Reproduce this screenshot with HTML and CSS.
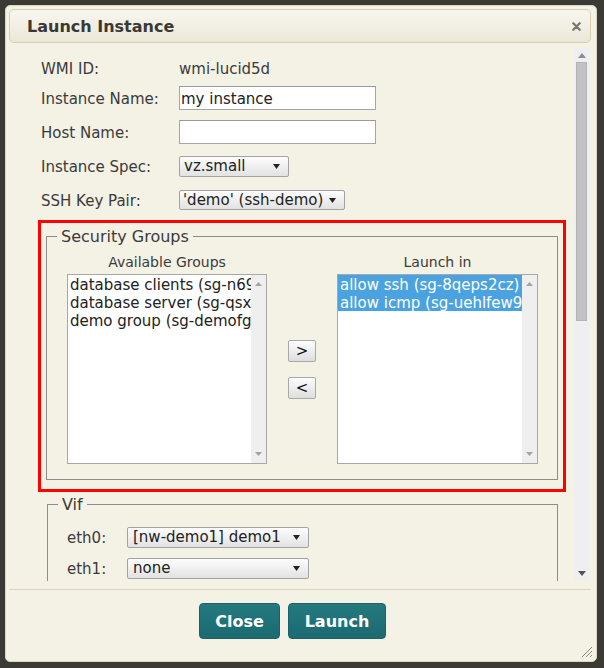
FILE: index.html
```html
<!DOCTYPE html>
<html>
<head>
<meta charset="utf-8">
<link rel="stylesheet" href="styles.css">
</head>
<body>
<div class="dialog">
  <div class="titlebar">
    <span class="title">Launch Instance</span>
    <svg class="close" width="9" height="9" viewBox="0 0 9 9"><path d="M1.3 1.3L7.7 7.7M7.7 1.3L1.3 7.7" stroke="#7b7770" stroke-width="2.3" stroke-linecap="round"/></svg>
  </div>
  <div class="body">
    <div class="scroll">
      <div class="form">
        <div class="row r1"><span class="lbl">WMI ID:</span><span class="val">wmi-lucid5d</span></div>
        <div class="row r2"><span class="lbl">Instance Name:</span><input class="input" type="text" value="my instance"></div>
        <div class="row"><span class="lbl">Host Name:</span><input class="input" type="text" value=""></div>
        <div class="row"><span class="lbl">Instance Spec:</span>
          <div class="select w-spec"><span>vz.small</span><svg class="caret" width="7" height="5" viewBox="0 0 7 5"><path d="M0 0H7L3.5 5Z" fill="#222"/></svg></div>
        </div>
        <div class="row"><span class="lbl">SSH Key Pair:</span>
          <div class="select w-ssh"><span>'demo' (ssh-demo)</span><svg class="caret" width="7" height="5" viewBox="0 0 7 5"><path d="M0 0H7L3.5 5Z" fill="#222"/></svg></div>
        </div>
      </div>

      <div class="highlight">
        <fieldset class="fs sg">
          <legend>Security Groups</legend>
          <div class="sg-grid">
            <div class="col-head">Available Groups</div>
            <div></div>
            <div class="col-head">Launch in</div>

            <div class="listbox">
              <div class="items">
                <div class="item">database clients (sg-n69</div>
                <div class="item">database server (sg-qsx</div>
                <div class="item">demo group (sg-demofg</div>
              </div>
              <div class="lb-scroll">
                <svg width="7" height="4" viewBox="0 0 7 4"><path d="M0 4H7L3.5 0Z" fill="#a3a3a3"/></svg>
                <svg width="7" height="4" viewBox="0 0 7 4"><path d="M0 0H7L3.5 4Z" fill="#a3a3a3"/></svg>
              </div>
            </div>
            <div class="movers">
              <button class="mv">&gt;</button>
              <button class="mv">&lt;</button>
            </div>
            <div class="listbox">
              <div class="items">
                <div class="item sel">allow ssh (sg-8qeps2cz)</div>
                <div class="item sel">allow icmp (sg-uehlfew9</div>
              </div>
              <div class="lb-scroll">
                <svg width="7" height="4" viewBox="0 0 7 4"><path d="M0 4H7L3.5 0Z" fill="#a3a3a3"/></svg>
                <svg width="7" height="4" viewBox="0 0 7 4"><path d="M0 0H7L3.5 4Z" fill="#a3a3a3"/></svg>
              </div>
            </div>
          </div>
        </fieldset>
      </div>

      <fieldset class="fs vif">
        <legend>Vif</legend>
        <div class="vif-rows">
          <div class="vrow"><span class="vlbl">eth0:</span>
            <div class="select w-vif"><span>[nw-demo1] demo1</span><svg class="caret" width="7" height="5" viewBox="0 0 7 5"><path d="M0 0H7L3.5 5Z" fill="#222"/></svg></div>
          </div>
          <div class="vrow"><span class="vlbl">eth1:</span>
            <div class="select w-vif"><span>none</span><svg class="caret" width="7" height="5" viewBox="0 0 7 5"><path d="M0 0H7L3.5 5Z" fill="#222"/></svg></div>
          </div>
        </div>
      </fieldset>
    </div>
    <div class="vscroll">
      <div class="arr"><svg width="8" height="5" viewBox="0 0 8 5"><path d="M0 5H8L4 0Z" fill="#8e8e8e"/></svg></div>
      <div class="thumb"></div>
      <div class="track"></div>
      <div class="arr"><svg width="8" height="5" viewBox="0 0 8 5"><path d="M0 0H8L4 5Z" fill="#555"/></svg></div>
    </div>
  </div>
  <div class="footer">
    <button class="btn b-close">Close</button>
    <button class="btn b-launch">Launch</button>
  </div>
  <svg class="grip" width="12" height="12" viewBox="0 0 12 12"><path d="M11 1L1 11M11 5L5 11M11 9L9 11" stroke="#8a8780" stroke-width="1"/></svg>
</div>
</body>
</html>
```

FILE: styles.css
```css
html, body {
  margin: 0;
  padding: 0;
}
body {
  background: #3c3a35;
  font-family: "DejaVu Sans", "Noto Sans", sans-serif;
  color: #3b3b3b;
  width: 604px;
  height: 668px;
  overflow: hidden;
}
.dialog {
  position: relative;
  margin: 5px;
  width: 592px;
  height: 657px;
  box-sizing: border-box;
  background: #f4f1e5;
  border: 1px solid #dcd6c0;
  border-radius: 5px;
  padding: 3px 5px 3px 3px;
  display: flex;
  flex-direction: column;
}
.titlebar {
  height: 34px;
  box-sizing: border-box;
  border: 1px solid #d6cfb2;
  border-radius: 5px;
  background: linear-gradient(#f8f6ef, #ebe7d8);
  display: flex;
  align-items: center;
  justify-content: space-between;
  padding: 0 9px 0 17px;
  flex: none;
}
.title {
  font-weight: bold;
  font-size: 16px;
  color: #3a3835;
}
.close {
  display: block;
}
.body {
  margin-top: 2px;
  height: 536px;
  width: 580px;
  display: flex;
  flex: none;
}
.scroll {
  width: 565px;
  height: 536px;
  overflow: hidden;
  box-sizing: border-box;
  padding: 11px 0 0 29px;
}
.form {
  display: flex;
  flex-direction: column;
}
.row {
  display: flex;
  align-items: center;
  height: 24px;
  padding-left: 3px;
  margin-top: 10px;
  font-size: 15px;
}
.row.r1 { margin-top: 0; }
.row.r2 { margin-top: 6px; }
.lbl {
  width: 138px;
  flex: none;
  padding-top: 2px;
}
.val { color: #3b3b3b; padding-top: 2px; }
.input {
  width: 197px;
  height: 24px;
  box-sizing: border-box;
  border: 1px solid #a6a6a6;
  border-top-color: #999;
  background: #fff;
  font-family: "DejaVu Sans", sans-serif;
  font-size: 15px;
  color: #222;
  padding: 1px 1px 0;
  margin: 0;
  outline: none;
}
.select {
  height: 21px;
  box-sizing: border-box;
  border: 1px solid #a3a3a3;
  border-radius: 2px;
  background: linear-gradient(#fdfdfd, #e2e2e2);
  display: flex;
  align-items: center;
  justify-content: space-between;
  padding: 0 8px 0 4px;
  font-size: 15px;
  color: #222;
  white-space: nowrap;
}
.select.w-spec { width: 110px; }
.select.w-ssh { width: 166px; height: 20px; padding-left: 3px; }
.select.w-vif { width: 182px; height: 21px; padding-left: 5px; }
.caret { flex: none; }

.highlight {
  width: 528px;
  height: 272px;
  box-sizing: border-box;
  border: 3px solid #ff0000;
  margin-top: 8px;
  padding: 4px 0 0 5px;
}
.fs {
  margin: 0;
  padding: 0;
  border: 1px solid #8d8d8d;
  min-width: 0;
  box-sizing: border-box;
}
.fs legend {
  margin-left: 10px;
  padding: 1px 4px 0;
  font-size: 16px;
  line-height: 18px;
  color: #3b3b3b;
}
.sg {
  width: 512px;
}
.sg-grid {
  display: grid;
  grid-template-columns: 200px 28px 201px;
  column-gap: 21px;
  row-gap: 4px;
  padding: 6px 0 15px 20px;
}
.col-head {
  font-size: 14px;
  line-height: 16px;
  padding-top: 2px;
  text-align: center;
  color: #3b3b3b;
}
.listbox {
  height: 190px;
  box-sizing: border-box;
  border: 1px solid #a8a8a8;
  background: #fff;
  display: flex;
}
.items {
  flex: 1;
  min-width: 0;
  overflow: hidden;
}
.item {
  font-size: 15px;
  height: 18px;
  line-height: 20px;
  white-space: nowrap;
  overflow: hidden;
  padding-left: 2px;
  color: #222;
}
.item.sel {
  background: #4aa3e0;
  color: #fff;
}
.lb-scroll {
  width: 15px;
  flex: none;
  background: #efefef;
  display: flex;
  flex-direction: column;
  justify-content: space-between;
  align-items: center;
  padding: 7px 0 7px;
  box-sizing: border-box;
}
.lb-scroll svg { display: block; }
.movers {
  display: flex;
  flex-direction: column;
  justify-content: center;
  gap: 15px;
}
.mv {
  width: 28px;
  height: 22px;
  box-sizing: border-box;
  border: 1px solid #a8a8a8;
  border-radius: 2px;
  background: linear-gradient(#fdfdfd, #dedede);
  font-family: "DejaVu Sans", sans-serif;
  font-size: 15px;
  color: #111;
  padding: 0;
  margin: 0;
  line-height: 18px;
}

.vif {
  width: 511px;
  margin-top: 3px;
  margin-left: 9px;
}
.vif-rows {
  display: flex;
  flex-direction: column;
  gap: 11px;
  padding: 13px 0 20px 19px;
}
.vrow {
  display: flex;
  align-items: center;
  height: 20px;
  font-size: 15px;
}
.vlbl {
  width: 60px;
  flex: none;
  padding-top: 2px;
}

.vscroll {
  width: 15px;
  margin: 3px 0 1px;
  background: #efefef;
  display: flex;
  flex-direction: column;
  align-items: center;
}
.arr {
  height: 14px;
  display: flex;
  align-items: center;
  justify-content: center;
  flex: none;
}
.arr svg { display: block; }
.thumb {
  width: 11px;
  height: 259px;
  box-sizing: border-box;
  background: #c2c2c2;
  border: 1px solid #b4b4b4;
  flex: none;
}
.track { flex: 1; }

.footer {
  margin-top: 8px;
  border-top: 1px solid #ddd6bf;
  padding: 13px 15px 0 0;
  display: flex;
  justify-content: center;
  gap: 8px;
}
.btn {
  height: 36px;
  box-sizing: border-box;
  border: 1px solid #1a6268;
  border-radius: 4px;
  background: linear-gradient(#24797f 0%, #1f7278 50%, #1b6b71 100%);
  color: #fff;
  font-family: "DejaVu Sans", sans-serif;
  font-weight: bold;
  font-size: 16px;
  padding: 0;
  margin: 0;
}
.b-close { width: 81px; }
.b-launch { width: 98px; }
.grip {
  position: absolute;
  right: 3px;
  bottom: 3px;
}
```
